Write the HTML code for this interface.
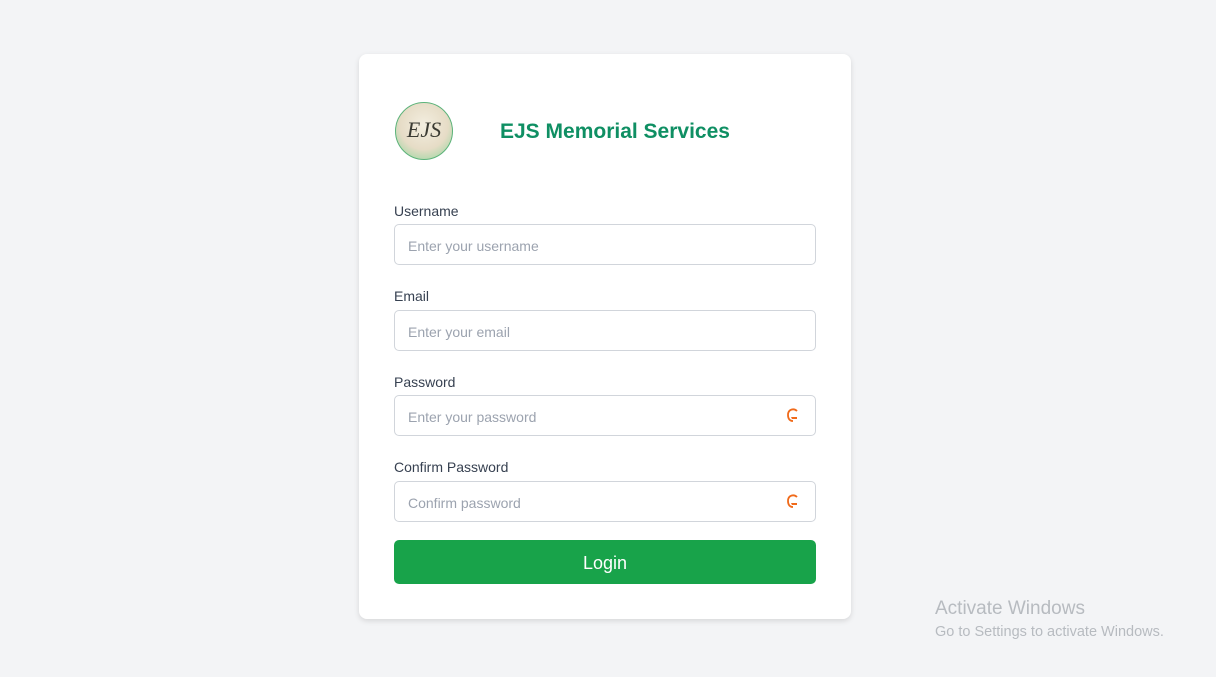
<!DOCTYPE html>
<html><head><meta charset="utf-8"><style>
*{box-sizing:border-box;margin:0;padding:0}
body{width:1216px;height:677px;background:#f3f4f6;font-family:"Liberation Sans",sans-serif;position:relative;overflow:hidden}
.card{position:absolute;left:359px;top:54px;width:492px;height:565px;background:#fff;border-radius:8px;box-shadow:0 2px 6px rgba(0,0,0,.12)}
.logo{position:absolute;left:36px;top:48px;width:58px;height:58px;border-radius:50%;background:radial-gradient(circle at 50% 40%,#f3eee0 0%,#e6dcc6 55%,#a8d8a8 85%,#5fb87a 100%);border:1px solid #5cb37a}
.logo span{position:absolute;left:0;right:0;top:14px;text-align:center;font-family:"Liberation Serif",serif;font-style:italic;font-size:22px;color:#3b3b33}
.title{position:absolute;left:141px;top:66px;font-size:21px;font-weight:bold;color:#0f8f63}
label{position:absolute;left:35px;font-size:14px;color:#374151;font-weight:500}
.in{position:absolute;left:35px;width:422px;height:41px;border:1px solid #d1d5db;border-radius:5px;font-size:14px;color:#9ca3af;padding:13px 13px 0}
.ic{position:absolute;right:14px;top:11px}
.btn{position:absolute;left:35px;top:486px;width:422px;height:44px;background:#18a34a;border-radius:5px;color:#fff;font-size:18px;text-align:center;line-height:46px}
.wm{position:absolute;left:935px;color:#b7bbc0}
</style></head><body>
<div class="card">
<div class="logo"><span>EJS</span></div>
<div class="title">EJS Memorial Services</div>
<label style="top:149px">Username</label>
<div class="in" style="top:170px">Enter your username</div>
<label style="top:234px">Email</label>
<div class="in" style="top:256px">Enter your email</div>
<label style="top:320px">Password</label>
<div class="in" style="top:341px">Enter your password<svg class="ic" width="16" height="18" viewBox="0 0 16 18"><path d="M12 4C9 1 3 2 3 8c0 4 2 6 5 6" fill="none" stroke="#f06a1a" stroke-width="1.8"/><path d="M6 10h6v2H7z" fill="#f06a1a"/></svg></div>
<label style="top:405px">Confirm Password</label>
<div class="in" style="top:427px">Confirm password<svg class="ic" width="16" height="18" viewBox="0 0 16 18"><path d="M12 4C9 1 3 2 3 8c0 4 2 6 5 6" fill="none" stroke="#f06a1a" stroke-width="1.8"/><path d="M6 10h6v2H7z" fill="#f06a1a"/></svg></div>
<div class="btn">Login</div>
</div>
<div class="wm" style="top:598px;font-size:19px">Activate Windows</div>
<div class="wm" style="top:624px;font-size:14.5px">Go to Settings to activate Windows.</div>
</body></html>
